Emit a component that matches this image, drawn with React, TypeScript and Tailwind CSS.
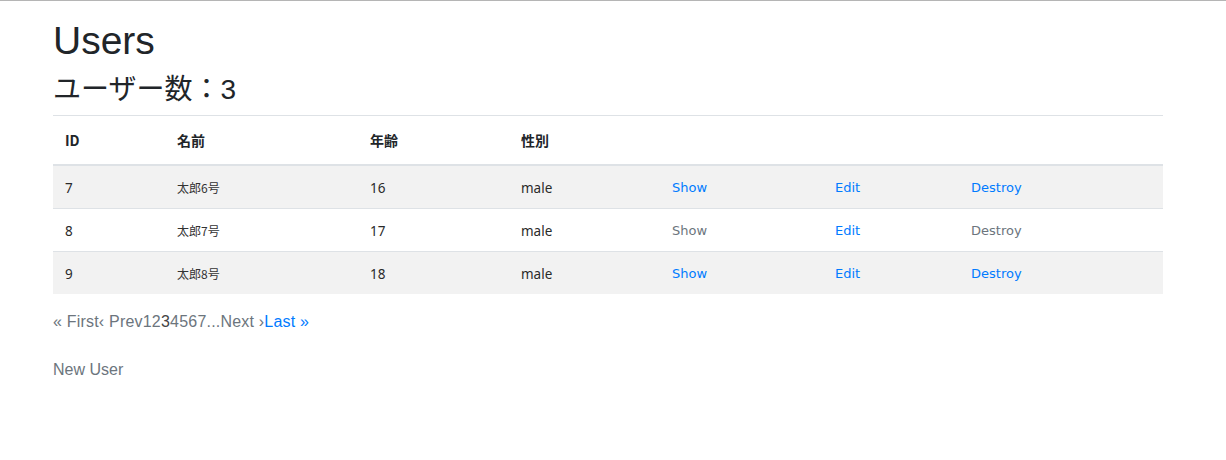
const users = [
  { id: 7, name: '太郎6号', age: 16, gender: 'male', linked: true },
  { id: 8, name: '太郎7号', age: 17, gender: 'male', linked: false },
  { id: 9, name: '太郎8号', age: 18, gender: 'male', linked: true },
];

const sans = "font-['Liberation_Sans','Noto_Sans_CJK_JP',sans-serif]";
const cell = "font-['Noto_Sans','Noto_Sans_CJK_JP',sans-serif] text-[13.5px] text-[#2a2a2a]";
const link = "font-['DejaVu_Sans',sans-serif] text-[13px]";

function ActionLink({ label, active }: { label: string; active: boolean }) {
  return (
    <a href="#" className={active ? 'text-[#007bff]' : 'text-[#6c757d]'}>
      {label}
    </a>
  );
}

export default function App() {
  return (
    <div className={`min-h-[460px] border-t border-[#b5b5b5] bg-white text-[#212529] ${sans}`}>
      <div className="ml-[38px] w-[1140px] px-[15px] pt-[16px]">
        <h1 className="mb-2 text-[39px] leading-[48px] font-medium">Users</h1>
        <h3 className="mb-2 text-[28px] leading-[34px]">ユーザー数：3</h3>

        <table className="w-full table-fixed border-collapse">
          <colgroup>
            <col className="w-[112px]" />
            <col className="w-[193px]" />
            <col className="w-[151px]" />
            <col className="w-[151px]" />
            <col className="w-[163px]" />
            <col className="w-[136px]" />
            <col />
          </colgroup>
          <thead>
            <tr className="border-t border-b-2 border-t-[#dee2e6] border-b-[#dee2e6] font-['Noto_Sans_CJK_JP',sans-serif] text-[14px] font-bold">
              <th className="px-3 py-3 text-left leading-6">ID</th>
              <th className="px-3 py-3 text-left leading-6">名前</th>
              <th className="px-3 py-3 text-left leading-6">年齢</th>
              <th className="px-3 py-3 text-left leading-6">性別</th>
              <th />
              <th />
              <th />
            </tr>
          </thead>
          <tbody>
            {users.map((u, i) => (
              <tr key={u.id} className={`${i > 0 ? 'border-t border-[#dee2e6]' : ''} ${i % 2 === 0 ? 'bg-[#f2f2f2]' : 'bg-white'}`}>
                <td className={`px-3 pt-[12px] pb-[10px] leading-5 ${cell}`}>{u.id}</td>
                <td className="px-3 pt-[12px] pb-[10px] font-['Noto_Sans_CJK_JP',sans-serif] text-[12px] leading-5 text-[#333]">{u.name}</td>
                <td className={`px-3 pt-[12px] pb-[10px] leading-5 ${cell}`}>{u.age}</td>
                <td className={`px-3 pt-[12px] pb-[10px] leading-5 ${cell}`}>{u.gender}</td>
                <td className={`px-3 pt-[12px] pb-[10px] leading-5 ${link}`}>
                  <ActionLink label="Show" active={u.linked} />
                </td>
                <td className={`px-3 pt-[12px] pb-[10px] leading-5 ${link}`}>
                  <ActionLink label="Edit" active />
                </td>
                <td className={`px-3 pt-[12px] pb-[10px] leading-5 ${link}`}>
                  <ActionLink label="Destroy" active={u.linked} />
                </td>
              </tr>
            ))}
          </tbody>
        </table>

        <nav className="mt-4 text-[16px] leading-6 tracking-[0.2px] text-[#6c757d]">
          <span>« First</span>
          <span>‹ Prev</span>
          <span>1</span>
          <span>2</span>
          <span className="text-[#444]">3</span>
          <span>4</span>
          <span>5</span>
          <span>6</span>
          <span>7</span>
          <span>...</span>
          <span>Next ›</span>
          <a href="#" className="text-[#007bff]">Last »</a>
        </nav>

        <div className="mt-6 text-[16px] leading-6 text-[#6c757d]">
          <a href="#">New User</a>
        </div>
      </div>
    </div>
  );
}
